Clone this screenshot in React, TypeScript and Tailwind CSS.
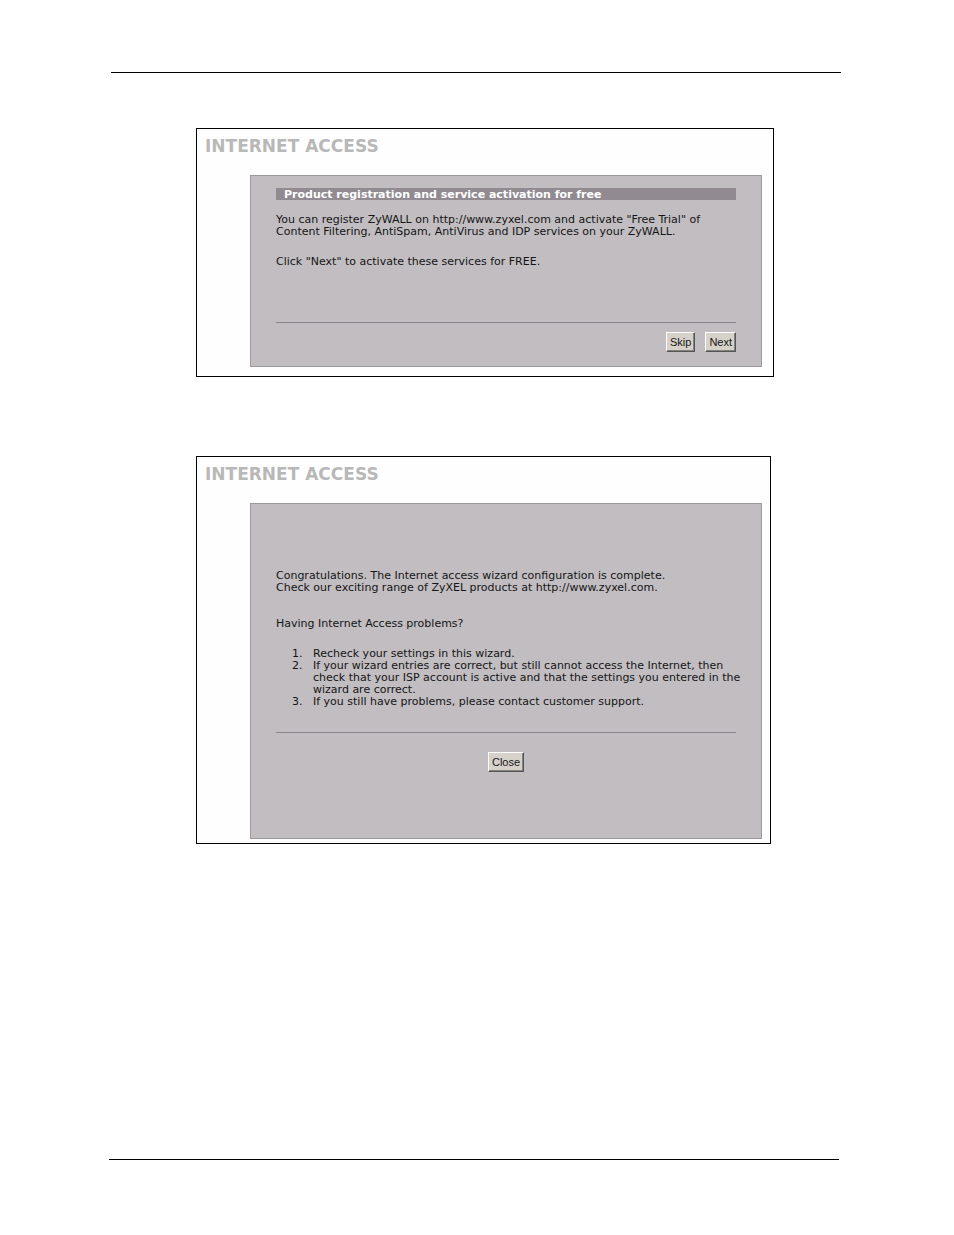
import type { ReactNode } from "react";

function WizardWindow({ className, children }: { className: string; children: ReactNode }) {
  return (
    <section className={`border border-black bg-[#fefefe] pt-2 pl-[53px] ${className}`}>
      <h1 className="-ml-[45px] text-[17px] leading-[18px] font-bold text-[#b8b8b8]">INTERNET ACCESS</h1>
      <div className="mt-5 border border-[#9a9a9a] bg-[#c1bdc1] px-[25px]">{children}</div>
    </section>
  );
}

function WizardButton({ children }: { children: ReactNode }) {
  return (
    <button
      type="button"
      className="h-5 border border-t-white border-l-white border-r-[#555555] border-b-[#555555] bg-[#d6d2ca] px-[3px] font-['Liberation_Sans',Arial,sans-serif] text-[11px] leading-4 shadow-[inset_-1px_-1px_0_#85817d]"
    >
      {children}
    </button>
  );
}

export default function App() {
  return (
    <main className="flex min-h-screen flex-col bg-white px-[109px] pt-[72px] pb-[75px] font-['DejaVu_Sans',Verdana,sans-serif] text-[11px] leading-3 text-[#151515]">
      <hr className="mr-1 ml-0.5 border-black" />

      <div className="mt-[55px] mr-[71px] ml-[87px]">
        <WizardWindow className="pr-[11px] pb-[9px]">
          <h2 className="mt-3 bg-[#918b91] pt-px pl-2 leading-[11px] font-bold text-white">
            Product registration and service activation for free
          </h2>
          <p className="mt-[14px]">
            You can register ZyWALL on http://www.zyxel.com and activate "Free Trial" of
            <br />
            Content Filtering, AntiSpam, AntiVirus and IDP services on your ZyWALL.
          </p>
          <p className="mt-[18px]">Click "Next" to activate these services for FREE.</p>
          <hr className="mt-[54px] border-[#89858a]" />
          <div className="mt-[9px] mb-[14px] flex justify-end gap-[10px]">
            <WizardButton>Skip</WizardButton>
            <WizardButton>Next</WizardButton>
          </div>
        </WizardWindow>
      </div>

      <div className="mt-[79px] mr-[74px] ml-[87px]">
        <WizardWindow className="pr-2 pb-1">
          <p className="mt-[66px]">
            Congratulations. The Internet access wizard configuration is complete.
            <br />
            Check our exciting range of ZyXEL products at http://www.zyxel.com.
          </p>
          <p className="mt-6">Having Internet Access problems?</p>
          <ol className="mt-[18px] -mr-4 list-decimal pl-[30px]">
            <li className="pl-[7px]">Recheck your settings in this wizard.</li>
            <li className="pl-[7px]">
              If your wizard entries are correct, but still cannot access the Internet, then
              <br />
              check that your ISP account is active and that the settings you entered in the
              <br />
              wizard are correct.
            </li>
            <li className="pl-[7px]">If you still have problems, please contact customer support.</li>
          </ol>
          <hr className="mt-6 border-[#89858a]" />
          <div className="mt-[19px] mb-[66px] flex justify-center">
            <WizardButton>Close</WizardButton>
          </div>
        </WizardWindow>
      </div>

      <hr className="mt-auto mr-1.5 border-black" />
    </main>
  );
}
